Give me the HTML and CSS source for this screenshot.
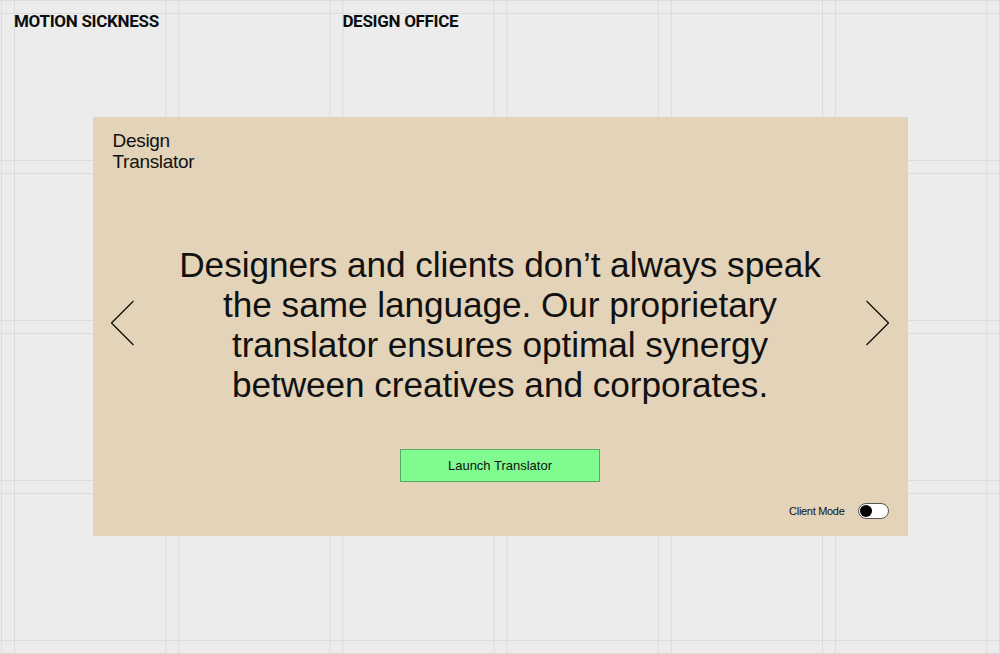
FILE: index.html
```html
<!DOCTYPE html>
<html lang="en">
<head>
<meta charset="utf-8">
<title>Design Translator — Motion Sickness Design Office</title>
<link rel="stylesheet" href="styles.css">
</head>
<body>
  <header class="topbar">
    <div class="brand">MOTION SICKNESS</div>
    <div class="spacer"></div>
    <div class="brand">DESIGN OFFICE</div>
  </header>
  <main class="stage">
    <section class="card">
      <h1 class="card-title">Design<br>Translator</h1>
      <button class="nav nav-prev" aria-label="Previous">
        <svg width="24" height="46" viewBox="0 0 24 46"><polyline points="22.5,1 0.5,23 22.5,45" fill="none" stroke="#111" stroke-width="1.3"/></svg>
      </button>
      <div class="center">
        <p class="statement">Designers and clients don’t always speak the same language. Our proprietary translator ensures optimal synergy between creatives and corporates.</p>
        <button class="launch">Launch Translator</button>
      </div>
      <button class="nav nav-next" aria-label="Next">
        <svg width="24" height="46" viewBox="0 0 24 46"><polyline points="1.5,1 23.5,23 1.5,45" fill="none" stroke="#111" stroke-width="1.3"/></svg>
      </button>
      <div class="mode">
        <span class="mode-label">Client Mode</span>
        <span class="toggle"><span class="knob"></span></span>
      </div>
    </section>
  </main>
</body>
</html>
```
FILE: styles.css
```css
html, body {
  margin: 0;
  padding: 0;
}
body {
  width: 1000px;
  height: 654px;
  overflow: hidden;
  font-family: "Liberation Sans", Arial, sans-serif;
  color: #111;
  background-color: #ececec;
  background-image:
    linear-gradient(to right, #dcdcdc 0, #dcdcdc 1px, transparent 1px, transparent 151px, #dcdcdc 151px, #dcdcdc 152px, transparent 152px),
    linear-gradient(to bottom, #dcdcdc 0, #dcdcdc 1px, transparent 1px, transparent 147px, #dcdcdc 147px, #dcdcdc 148px, transparent 148px);
  background-size: 164.2px 100%, 100% 160px;
  background-position: 14px 0, 0 13px;
}
.topbar {
  display: grid;
  grid-template-columns: repeat(6, 151px);
  column-gap: 13.2px;
  padding: 11px 0 0 14px;
  height: 20px;
}
.brand {
  font-family: Roboto, "Liberation Sans", Arial, sans-serif;
  font-weight: 700;
  font-size: 17px;
  line-height: 20px;
  letter-spacing: -0.3px;
  white-space: nowrap;
  color: #0d0d0d;
}
.stage {
  padding-top: 86px;
}
.card {
  box-sizing: border-box;
  width: 815px;
  height: 419px;
  margin: 0 auto;
  background: #e3d3b8;
  padding: 13px 19px 17px 19px;
  display: grid;
  grid-template-columns: 24px 1fr 24px;
  grid-template-rows: auto 1fr auto;
}
.card-title {
  grid-row: 1;
  grid-column: 1 / 3;
  margin: 0 0 0 1px;
  font-weight: 400;
  font-size: 19px;
  line-height: 21px;
  letter-spacing: -0.3px;
}
.nav {
  grid-row: 1 / 4;
  align-self: center;
  background: none;
  border: 0;
  padding: 0;
  margin: 0;
  width: 24px;
  height: 46px;
  cursor: pointer;
}
.nav svg { display: block; }
.nav-prev { grid-column: 1; margin-top: -4px; margin-left: -1px; }
.nav-next { grid-column: 3; margin-top: -4px; }
.center {
  grid-row: 2;
  grid-column: 2;
  align-self: end;
  padding-bottom: 21px;
  display: flex;
  flex-direction: column;
  align-items: center;
}
.statement {
  margin: 0;
  max-width: 660px;
  text-align: center;
  font-size: 35.2px;
  line-height: 40px;
  letter-spacing: -0.05px;
}
.launch {
  margin-top: 44px;
  width: 200px;
  height: 33px;
  box-sizing: border-box;
  background: #80fb8f;
  border: 1px solid #5aa865;
  font-family: "Liberation Sans", Arial, sans-serif;
  font-size: 13px;
  color: #111;
  padding: 0;
  cursor: pointer;
}
.mode {
  grid-row: 3;
  grid-column: 1 / 4;
  display: flex;
  justify-content: flex-end;
  align-items: center;
  gap: 13px;
}
.mode-label {
  font-size: 11px;
  letter-spacing: -0.3px;
}
.toggle {
  box-sizing: border-box;
  width: 31px;
  height: 16px;
  border: 1px solid #555;
  border-radius: 8px;
  background: #fff;
  display: flex;
  align-items: center;
  padding-left: 1px;
}
.knob {
  width: 12px;
  height: 12px;
  border-radius: 50%;
  background: #000;
}
```
